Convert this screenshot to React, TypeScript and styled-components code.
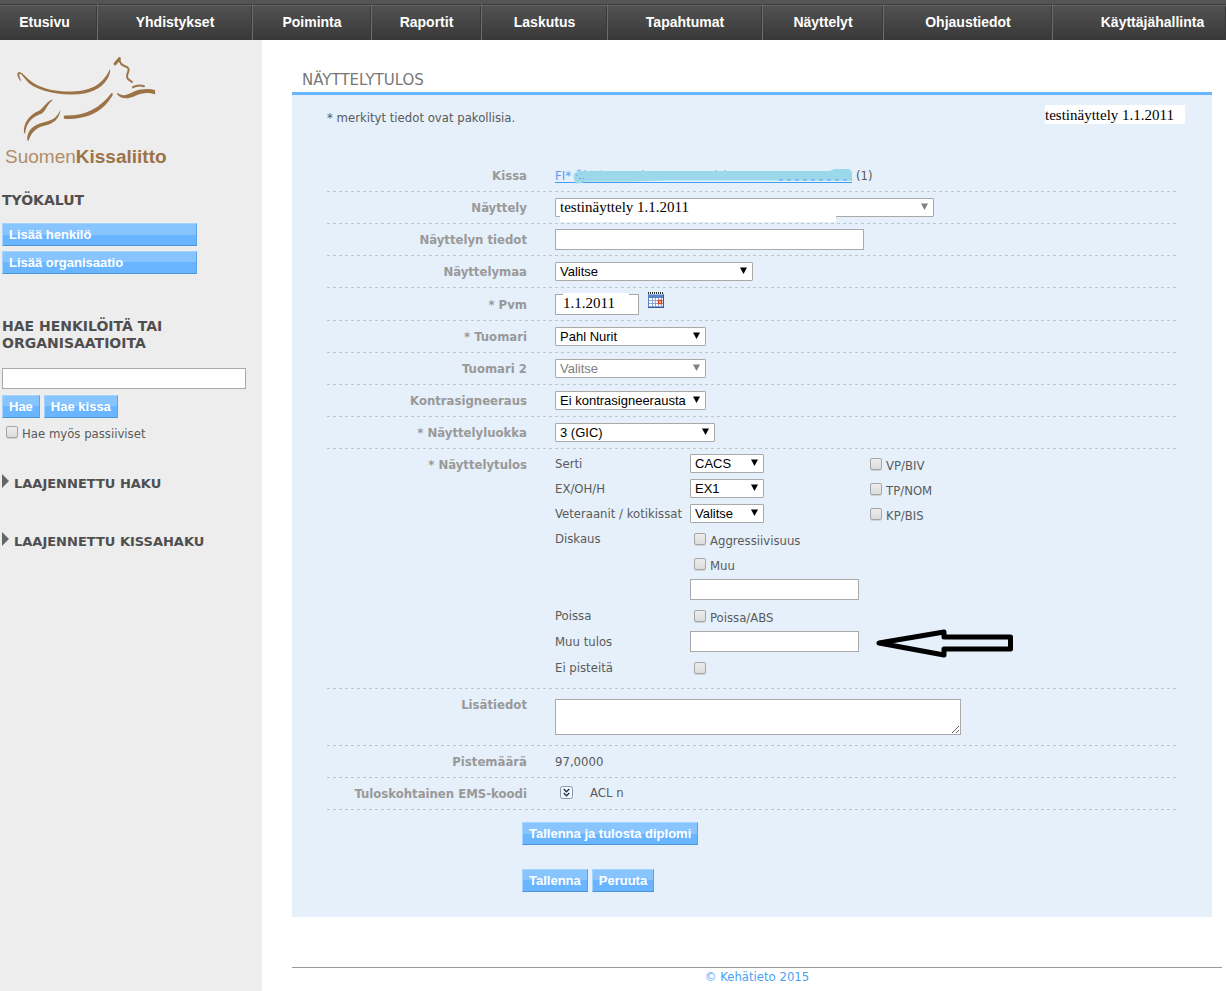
import React from "react";
import styled, { createGlobalStyle, css } from "styled-components";

const sans = '"DejaVu Sans Condensed", "DejaVu Sans", sans-serif';
const wide = '"DejaVu Sans", sans-serif';
const arial = '"Liberation Sans", Arial, sans-serif';
const serif = '"Liberation Serif", "Times New Roman", serif';

const GlobalStyle = createGlobalStyle`
  *, *::before, *::after { box-sizing: border-box; }
  html, body, #root { min-height: 100vh; }
  body { margin: 0; background: #fff; color: #5a5a5a; font: 13px/17px ${sans}; }
  h1, h2, p { margin: 0; }
`;

const Page = styled.div`
  display: flex;
  flex-direction: column;
  min-height: 100vh;
`;

const Nav = styled.nav`
  display: flex;
  height: 40px;
  border-top: 4px solid #555;
  overflow: hidden;
`;

const NavItem = styled.a<{ $grow: number; $left?: number; $right?: number }>`
  flex: ${(p) => p.$grow} 1 0;
  display: flex;
  align-items: center;
  justify-content: center;
  padding: 0 ${(p) => p.$right ?? 0}px 0 ${(p) => p.$left ?? 0}px;
  border-top: 1px solid #3c3c3c;
  border-right: 1px solid #6c6c6c;
  box-shadow: inset 0 1px #626262, inset -1px 0 #3a3a3a;
  background: linear-gradient(#535353, #383838);
  color: #fff;
  font: bold 14px/17px ${arial};
  text-decoration: none;
  white-space: nowrap;
  &:last-child { border-right: 0; }
`;

const Body = styled.div`
  flex: 1;
  display: flex;
`;

const Sidebar = styled.aside`
  flex: none;
  width: 262px;
  padding: 15px 16px 0 2px;
  background: #ededed;
`;

const LogoLink = styled.a`
  display: block;
  color: #9c7347;
  text-decoration: none;
  svg { display: block; }
`;

const LogoName = styled.span`
  display: block;
  padding-left: 3px;
  font: 19px/22px ${arial};
  color: #b08d67;
  b { color: #9c7347; }
`;

const SideTitle = styled.h2<{ $top: number }>`
  margin-top: ${(p) => p.$top}px;
  font: bold 14px/17px ${wide};
  color: #4f4f4f;
`;

const Stack = styled.div`
  display: flex;
  flex-direction: column;
  gap: 5px;
  width: 195px;
  margin-top: 14px;
`;

const Button = styled.button`
  height: 23px;
  padding: 0 6px;
  border: 1px solid;
  border-color: #a5d3ff #5ba3e8 #4c94d8 #a5d3ff;
  border-radius: 0;
  background: linear-gradient(#88c5ff 50%, #69b5ff 50%);
  color: #fff;
  font: bold 13px/17px ${arial};
  text-align: left;
  white-space: nowrap;
`;

const ButtonRow = styled.div<{ $top: number }>`
  display: flex;
  gap: 4px;
  margin-top: ${(p) => p.$top}px;
`;

const TextInput = styled.input<{ $width: number }>`
  display: block;
  width: ${(p) => p.$width}px;
  height: 21px;
  padding: 0 4px;
  border: 1px solid #a9a9a9;
  border-radius: 0;
  background: #fff;
  color: #000;
  font: 13px/17px ${arial};
`;

const SearchForm = styled.form`
  margin-top: 16px;
`;

const CheckLabel = styled.label<{ $inset?: boolean }>`
  display: flex;
  align-items: center;
  gap: 4px;
  padding-left: ${(p) => (p.$inset ? 4 : 0)}px;
  span { padding-top: 4px; }
`;

const SideCheck = styled.div`
  margin-top: 3px;
`;

const Checkbox = styled.input.attrs({ type: "checkbox" })`
  appearance: none;
  width: 12px;
  height: 12px;
  margin: 0;
  border: 1px solid #a6a6a6;
  border-radius: 2px;
  background: linear-gradient(#ececec, #dcdcdc);
  box-shadow: 0 1px #cfd3d8;
  &:checked { background: #69b5ff; }
`;

const Expander = styled.button<{ $top: number }>`
  display: flex;
  align-items: flex-start;
  gap: 5px;
  margin-top: ${(p) => p.$top}px;
  padding: 0;
  border: 0;
  background: none;
  font: bold 13px/17px ${wide};
  color: #4f4f4f;
  white-space: nowrap;
  svg { flex: none; }
  span { padding-top: 1px; }
`;

const Main = styled.main`
  flex: 1;
  min-width: 0;
  padding: 30px 4px 0 30px;
`;

const Title = styled.h1`
  padding: 0 0 2px 10px;
  font: 15px/20px ${wide};
  color: #777;
`;

const Panel = styled.section`
  min-height: 825px;
  margin-right: 10px;
  padding: 10px 34px 25px 35px;
  border-top: 3px solid #69b5ff;
  background: #e5f0fa;
`;

const PanelHead = styled.div`
  display: flex;
  justify-content: space-between;
  height: 55px;
`;

const Note = styled.p`
  padding-top: 4px;
`;

const ShowTag = styled.span`
  width: 140px;
  height: 19px;
  margin-right: -7px;
  background: #fff;
  color: #000;
  font: 15px/20px ${serif};
`;

const Row = styled.div<{ $height?: number; $top?: boolean }>`
  display: grid;
  grid-template-columns: 200px 1fr;
  column-gap: 28px;
  align-items: ${(p) => (p.$top ? "start" : "center")};
  min-height: ${(p) => p.$height ?? 32}px;
  border-bottom: 1px solid transparent;
  background: repeating-linear-gradient(90deg, #bcc6d0 0 3px, transparent 3px 6px) 0 100% / 100% 1px no-repeat border-box;
`;

const labelStyle = css`
  color: #999;
  font: bold 13px/17px ${sans};
  text-align: right;
`;

const Label = styled.label<{ $pad?: number }>`
  ${labelStyle}
  padding-top: ${(p) => p.$pad ?? 0}px;
`;

const LabelText = styled.span<{ $pad?: number }>`
  ${labelStyle}
  padding-top: ${(p) => p.$pad ?? 0}px;
`;

const Field = styled.div<{ $gap?: number }>`
  display: flex;
  align-items: center;
  gap: ${(p) => p.$gap ?? 4}px;
`;

const CatLink = styled.a`
  position: relative;
  width: 297px;
  border-bottom: 1px solid #3f9cf5;
  color: #5a9bf5;
  line-height: 13px;
  text-decoration: none;
  svg { position: absolute; left: 18px; top: -1px; }
`;

const SelectBox = styled.span<{ $width: number }>`
  position: relative;
  display: block;
  width: ${(p) => p.$width}px;
  height: 19px;
  svg { position: absolute; right: 6px; top: 5px; pointer-events: none; }
`;

const SelectInput = styled.select<{ $serif?: boolean }>`
  appearance: none;
  display: block;
  width: 100%;
  height: 19px;
  padding: 0 4px;
  border: 1px solid #a9a9a9;
  border-radius: 1px;
  background: #fff;
  color: #000;
  font: ${(p) => (p.$serif ? `15px/17px ${serif}` : `13px/17px ${arial}`)};
  opacity: 1;
  &:disabled { color: ${(p) => (p.$serif ? "#000" : "#808080")}; }
`;

const SelectPatch = styled.span`
  position: absolute;
  left: 5px;
  top: 18px;
  width: 276px;
  height: 6px;
  background: #fff;
`;

const DateBox = styled.span`
  position: relative;
  input { padding-left: 7px; padding-bottom: 2px; font: 15px/17px ${serif}; }
  &::before {
    content: "";
    position: absolute;
    left: 8px;
    top: -1px;
    width: 66px;
    height: 3px;
    background: #fff;
  }
`;

const IconButton = styled.button`
  display: block;
  padding: 0;
  border: 0;
  background: none;
  svg { display: block; }
`;

const CalendarButton = styled(IconButton)`
  margin-bottom: 8px;
`;

const Results = styled.div`
  display: grid;
  grid-template-columns: 135px 180px 1fr;
  grid-template-rows: repeat(5, 25px) 27px 25px 27px 25px;
  align-items: center;
  padding: 2px 0 8px;
  white-space: nowrap;
  svg { display: block; }
`;

const ArrowCell = styled.div`
  padding-left: 5px;
`;

const TextArea = styled.textarea`
  display: block;
  width: 406px;
  height: 36px;
  margin: 10px 0;
  border: 1px solid #a9a9a9;
  background: #fff;
  font: 13px/17px ${arial};
`;

const EmsField = styled(Field)`
  padding: 0 0 2px 5px;
`;

const Actions = styled.div`
  padding-left: 195px;
`;

const Footer = styled.footer`
  margin-top: 50px;
  border-top: 1px solid #999;
  color: #4a9ff5;
  text-align: center;
  line-height: 17px;
`;

const navItems = [
  { text: "Etusivu", grow: 89, right: 8 },
  { text: "Yhdistykset", grow: 154 },
  { text: "Poiminta", grow: 118 },
  { text: "Raportit", grow: 109 },
  { text: "Laskutus", grow: 125 },
  { text: "Tapahtumat", grow: 154 },
  { text: "Näyttelyt", grow: 120 },
  { text: "Ohjaustiedot", grow: 168 },
  { text: "Käyttäjähallinta", grow: 147, left: 26 },
];

function Select({ id, width, value, disabled, serifText, children }: {
  id: string; width: number; value: string; disabled?: boolean; serifText?: boolean; children?: React.ReactNode;
}) {
  return (
    <SelectBox $width={width}>
      <SelectInput id={id} disabled={disabled} $serif={serifText}>
        <option>{value}</option>
      </SelectInput>
      <svg width="7" height="7" viewBox="0 0 7 7" aria-hidden="true">
        <path d="M0 0.5H7L3.5 7Z" fill={disabled ? "#808080" : "#000"} />
      </svg>
      {children}
    </SelectBox>
  );
}

function Check({ text, inset }: { text: string; inset?: boolean }) {
  return (
    <CheckLabel $inset={inset}>
      <Checkbox />
      <span>{text}</span>
    </CheckLabel>
  );
}

function CatDrawing() {
  return (
    <svg width="160" height="91" viewBox="2 55 160 91" fill="none" stroke="currentColor" strokeLinecap="round" aria-hidden="true">
      <g fill="currentColor" stroke="none">
        <path d="M20.6 81C16.5 76 16.5 72 19.5 72C24 73 27 80 37 85C49 91 62 91.6 72 91.4C92 91 103 84 109.8 69.3C110.8 71 109.5 75 108 78C101 90 88 95 70 94.5C52 94 38 90 30 84C25 80 23 75 20 73.8C18.5 74 19.5 77 21.2 80.5Z" />
        <path d="M64.5 115.5C85 116 99 109 111.5 93Q113.5 92.5 112.5 95.5C103 111 90 119 65 119Q62.5 117.5 64.5 115.5Z" />
        <path d="M117 92.8C123 97 127 95 134 91.5C141 88.5 149 88.5 155 90L155.2 94.5C148 92 142 93 136 95.5C128 99.5 121 99.5 117 94Z" />
        <path d="M52.5 99.5C46 102 44 107 39.5 110.5C29 115 23 123 24 133.5L25.2 133C26.5 123 31 117.5 42 113.5C47 109 48 103 52 101Z" />
        <path d="M60.5 110C56 119 51 120.5 43 122.5C32 125.5 27 131 27.2 140L28.5 141C31 133 35 128 45 125.5C54 123.5 59 119 60.5 110Z" />
      </g>
      <path d="M115.3 63.3L119.3 59.2C120 64 122 65 125 66.2C128.5 67.5 129.3 69 128.3 71.5C127 74.5 126 76.5 128 79L132 82" strokeWidth="2" />
      <path d="M115 64L119.5 58.5" strokeWidth="2.8" />
      <path d="M133 87.2Q138 84.5 144 86.2" strokeWidth="2" />
    </svg>
  );
}

function Triangle() {
  return (
    <svg width="7" height="14" viewBox="0 0 7 14" aria-hidden="true">
      <path d="M0 0L7 7L0 14Z" fill="#666" />
    </svg>
  );
}

function CalendarIcon() {
  return (
    <svg width="16" height="16" viewBox="0 0 16 16" aria-hidden="true">
      <path d="M0 2H16V16H0Z" fill="#5b83c8" />
      <path d="M0 15H16V16H0Z M15 3H16V16H15Z" fill="#3a5a96" />
      <path d="M0 1H16" stroke="#333" strokeWidth="2" strokeDasharray="1 1" />
      <path d="M1 2.5H15" stroke="#9dbdf0" />
      <path d="M1 6H15V15H1Z" fill="#fff" />
      <path d="M4.5 6V15M7.5 6V15M10.5 6V15M13.5 6V15M1 8.5H15M1 11.5H15M1 14.5H15" stroke="#8aa6d6" />
      <path d="M10.5 8.5H13.5V11.5H10.5Z" fill="#fff" stroke="#e0401c" strokeWidth="1.5" />
    </svg>
  );
}

function ChevronsIcon() {
  return (
    <svg width="13" height="13" viewBox="0 0 13 13" fill="none" aria-hidden="true">
      <rect x="0.5" y="0.5" width="12" height="12" rx="2" fill="#f4fafc" stroke="#8098a8" />
      <path d="M3.7 3L6.5 5.7L9.3 3M3.7 7L6.5 9.7L9.3 7" stroke="#2b3558" strokeWidth="1.5" />
    </svg>
  );
}

function Scribble() {
  return (
    <svg width="282" height="17" viewBox="0 0 282 17" aria-hidden="true">
      <path d="M4 2.5L8 2M12 2V4M19 2.5V4M28 2.5V4M70 2V4M143 2V4M152 2V4" stroke="#7e9cf5" />
      <path d="M1 6Q3 3 8 3H257L261 1H276Q279 2 279 6V12Q278 13 272 12.5H90L60 13.5H12Q8 16 3 15.5Q0 12 1 6Z" fill="#9ad8ea" />
      <path d="M206 12H279" stroke="#5a9bf5" strokeDasharray="4 4" />
      <path d="M3 8L4.5 7M6 10.5H8M10 10.5H11" stroke="#7e9cf5" />
    </svg>
  );
}

function ArrowDrawing() {
  return (
    <svg width="140" height="32" viewBox="0 0 140 32" fill="none" stroke="#000" strokeWidth="5" strokeLinejoin="round" aria-hidden="true">
      <path d="M4 17L69 6V11H135.5V23H69V29Z" />
    </svg>
  );
}

export default function App() {
  return (
    <Page>
      <GlobalStyle />
      <Nav>
        {navItems.map((item) => (
          <NavItem key={item.text} href="#" $grow={item.grow} $left={item.left} $right={item.right}>
            {item.text}
          </NavItem>
        ))}
      </Nav>
      <Body>
        <Sidebar>
          <LogoLink href="#">
            <CatDrawing />
            <LogoName>Suomen<b>Kissaliitto</b></LogoName>
          </LogoLink>
          <SideTitle $top={24}>TYÖKALUT</SideTitle>
          <Stack>
            <Button>Lisää henkilö</Button>
            <Button>Lisää organisaatio</Button>
          </Stack>
          <SideTitle $top={44}>HAE HENKILÖITÄ TAI ORGANISAATIOITA</SideTitle>
          <SearchForm>
            <TextInput $width={244} aria-label="Hae henkilöitä tai organisaatioita" />
            <ButtonRow $top={6}>
              <Button type="button">Hae</Button>
              <Button type="button">Hae kissa</Button>
            </ButtonRow>
            <SideCheck>
              <Check text="Hae myös passiiviset" inset />
            </SideCheck>
          </SearchForm>
          <Expander $top={32}><Triangle /><span>LAAJENNETTU HAKU</span></Expander>
          <Expander $top={40}><Triangle /><span>LAAJENNETTU KISSAHAKU</span></Expander>
        </Sidebar>
        <Main>
          <Title>NÄYTTELYTULOS</Title>
          <Panel>
            <PanelHead>
              <Note>* merkityt tiedot ovat pakollisia.</Note>
              <ShowTag>testinäyttely 1.1.2011</ShowTag>
            </PanelHead>
            <Row>
              <LabelText>Kissa</LabelText>
              <Field>
                <CatLink href="#">FI*<Scribble /></CatLink>
                <span>(1)</span>
              </Field>
            </Row>
            <Row>
              <Label htmlFor="show">Näyttely</Label>
              <Select id="show" width={379} value="testinäyttely 1.1.2011" disabled serifText>
                <SelectPatch />
              </Select>
            </Row>
            <Row>
              <Label htmlFor="info">Näyttelyn tiedot</Label>
              <TextInput id="info" $width={309} />
            </Row>
            <Row>
              <Label htmlFor="country">Näyttelymaa</Label>
              <Select id="country" width={198} value="Valitse" />
            </Row>
            <Row $height={33}>
              <Label htmlFor="date">* Pvm</Label>
              <Field $gap={9}>
                <DateBox><TextInput id="date" $width={84} defaultValue="1.1.2011" /></DateBox>
                <CalendarButton aria-label="Kalenteri"><CalendarIcon /></CalendarButton>
              </Field>
            </Row>
            <Row>
              <Label htmlFor="judge">* Tuomari</Label>
              <Select id="judge" width={151} value="Pahl Nurit" />
            </Row>
            <Row>
              <Label htmlFor="judge2">Tuomari 2</Label>
              <Select id="judge2" width={151} value="Valitse" disabled />
            </Row>
            <Row>
              <Label htmlFor="counter">Kontrasigneeraus</Label>
              <Select id="counter" width={151} value="Ei kontrasigneerausta" />
            </Row>
            <Row>
              <Label htmlFor="class">* Näyttelyluokka</Label>
              <Select id="class" width={160} value="3 (GIC)" />
            </Row>
            <Row $top>
              <LabelText $pad={7}>* Näyttelytulos</LabelText>
              <Results>
                <label htmlFor="cert">Serti</label>
                <Select id="cert" width={74} value="CACS" />
                <Check text="VP/BIV" />
                <label htmlFor="ex">EX/OH/H</label>
                <Select id="ex" width={74} value="EX1" />
                <Check text="TP/NOM" />
                <label htmlFor="veteran">Veteraanit / kotikissat</label>
                <Select id="veteran" width={74} value="Valitse" />
                <Check text="KP/BIS" />
                <span>Diskaus</span>
                <Check text="Aggressiivisuus" inset />
                <span />
                <span />
                <Check text="Muu" inset />
                <span />
                <span />
                <TextInput $width={169} aria-label="Muu diskaus" />
                <span />
                <span>Poissa</span>
                <Check text="Poissa/ABS" inset />
                <span />
                <label htmlFor="other">Muu tulos</label>
                <TextInput id="other" $width={169} />
                <ArrowCell><ArrowDrawing /></ArrowCell>
                <label htmlFor="nopoints">Ei pisteitä</label>
                <CheckLabel as="div" $inset><Checkbox id="nopoints" /></CheckLabel>
              </Results>
            </Row>
            <Row $top>
              <Label htmlFor="notes" $pad={7}>Lisätiedot</Label>
              <TextArea id="notes" />
            </Row>
            <Row>
              <LabelText>Pistemäärä</LabelText>
              <span>97,0000</span>
            </Row>
            <Row>
              <LabelText>Tuloskohtainen EMS-koodi</LabelText>
              <EmsField $gap={17}>
                <IconButton aria-label="Näytä EMS-koodit"><ChevronsIcon /></IconButton>
                <span>ACL n</span>
              </EmsField>
            </Row>
            <Actions>
              <ButtonRow $top={12}>
                <Button>Tallenna ja tulosta diplomi</Button>
              </ButtonRow>
              <ButtonRow $top={24}>
                <Button>Tallenna</Button>
                <Button>Peruuta</Button>
              </ButtonRow>
            </Actions>
          </Panel>
          <Footer>© Kehätieto 2015</Footer>
        </Main>
      </Body>
    </Page>
  );
}
